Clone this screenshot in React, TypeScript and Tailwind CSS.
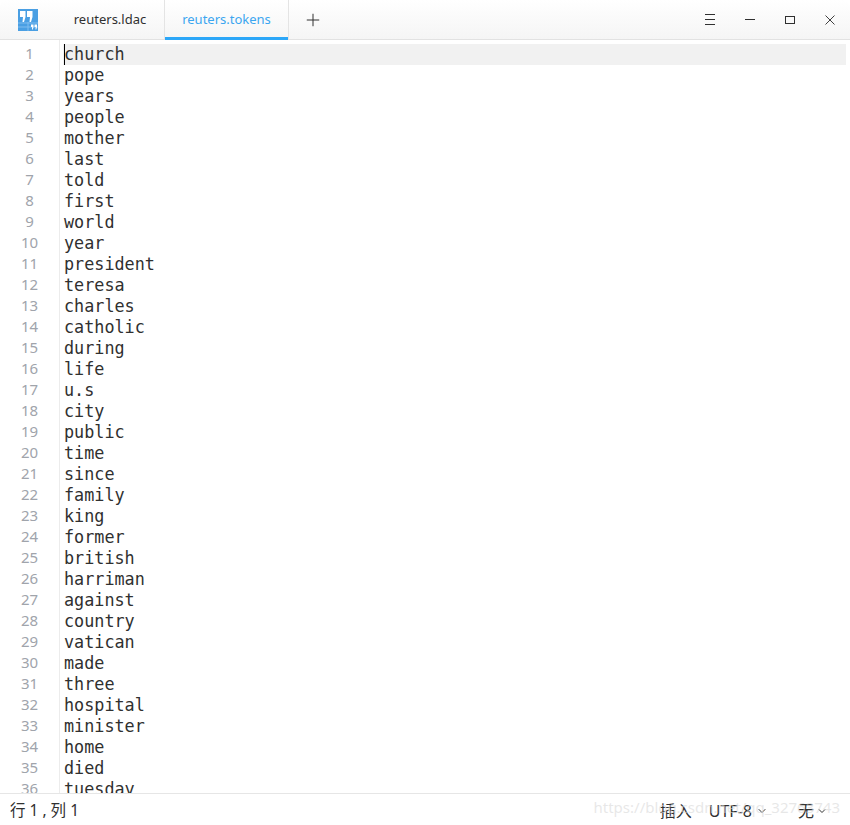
import React from "react";
import { ChevronDown, Plus } from "lucide-react";

const words = [
  "church",
  "pope",
  "years",
  "people",
  "mother",
  "last",
  "told",
  "first",
  "world",
  "year",
  "president",
  "teresa",
  "charles",
  "catholic",
  "during",
  "life",
  "u.s",
  "city",
  "public",
  "time",
  "since",
  "family",
  "king",
  "former",
  "british",
  "harriman",
  "against",
  "country",
  "vatican",
  "made",
  "three",
  "hospital",
  "minister",
  "home",
  "died",
  "tuesday",
];

const uiFont = "[font-family:'Noto_Sans','Noto_Sans_CJK_SC',sans-serif]";

function AppLogo() {
  return (
    <svg width="20" height="22" viewBox="0 0 20 22" className="shrink-0">
      <rect width="20" height="22" fill="#4a9fe3" />
      <path d="M0 14h20M0 18h20M10 13v9" stroke="#7fbdf0" strokeWidth="1" />
      <path d="M2 2h5.500v6l-1.500 5H4.500L5 8H2z" fill="#fff" />
      <path d="M9 2h5.500v6l-1.500 5h-1.500L12 8H9z" fill="#fff" />
      <path d="M13 15.500h2.500v2.500l-.7 2.500H14l.2-2.500H13zM16.500 15.500H19v2.500l-.7 2.500h-.8l.2-2.500h-1.200z" fill="#fff" />
    </svg>
  );
}

export default function App() {
  return (
    <div className={`h-[825px] w-[850px] flex flex-col overflow-hidden bg-white ${uiFont}`}>
      <div className="h-10 shrink-0 flex items-stretch rounded-t-lg border-b border-[#e2e2e2] bg-gradient-to-b from-white to-[#f5f5f5]">
        <div className="ml-[18px] flex items-center">
          <AppLogo />
        </div>
        <div className="ml-[18px] w-[108px] flex items-center justify-center text-[13px] text-[#303030]">
          reuters.ldac
        </div>
        <div className="relative w-[125px] flex items-center justify-center border-x border-[#e4e4e4] text-[13px] text-[#3ba6f0]">
          reuters.tokens
          <div className="absolute inset-x-0 bottom-[-1px] h-[3px] bg-[#2ca7f8]" />
        </div>
        <div className="w-12 flex items-center justify-center text-[#303030]">
          <Plus size={20} strokeWidth={1.2} />
        </div>
        <div className="ml-auto flex items-center gap-5 pr-[10px]">
          <div className="w-5 flex flex-col gap-[4px] items-center">
            <div className="h-px w-[10px] bg-[#303030]" />
            <div className="h-px w-[10px] bg-[#303030]" />
            <div className="h-px w-[10px] bg-[#303030]" />
          </div>
          <div className="w-5 flex justify-center">
            <div className="h-px w-[10px] bg-[#303030]" />
          </div>
          <div className="w-5 flex justify-center">
            <div className="h-[8px] w-[10px] border border-[#303030]" />
          </div>
          <div className="w-5 flex justify-center">
            <svg width="10" height="10" viewBox="0 0 10 10" stroke="#404040" strokeWidth="1">
              <path d="M0.500 0.500l9 9M9.500 0.500l-9 9" />
            </svg>
          </div>
        </div>
      </div>

      <div className="flex-1 min-h-0 overflow-hidden flex [font-family:'DejaVu_Sans_Mono',monospace] text-[16.8px] leading-[21px]">
        <div className={`w-[60px] shrink-0 border-r border-[#ececec] pt-[3px] text-center text-[15px] text-[#a0a4ab] ${uiFont}`}>
          {words.map((_, i) => (
            <div key={i} className="h-[21px]">
              {i + 1}
            </div>
          ))}
        </div>
        <div className="flex-1 pt-[4px] pl-[3px] pr-[4px] text-[#303030]">
          {words.map((word, i) => (
            <div key={word} className={i === 0 ? "h-[21px] bg-[#f1f1f1] relative pl-px" : "h-[21px] pl-px"}>
              {i === 0 && <div className="absolute left-px top-0 h-[21px] w-px bg-black" />}
              {word}
            </div>
          ))}
        </div>
      </div>

      <div className="relative h-[32px] shrink-0 flex items-center border-t border-[#e6e6e6] bg-white pt-[3px] pl-[10px] pr-[22px] text-[16px] text-[#303030]">
        <span className="text-[15.5px]">行 1 , 列 1</span>
        <div className="ml-auto flex items-center">
          <span>插入</span>
          <span className="ml-[17px]">UTF-8</span>
          <ChevronDown size={12} className="ml-[4px]" />
          <span className="ml-[30px]">无</span>
          <ChevronDown size={12} className="ml-[2px]" />
        </div>
        <div className="absolute right-[10px] top-[2px] text-[15px] text-[#d8d8d8]/60">
          https://blog.csdn.net/qq_32763743
        </div>
      </div>
    </div>
  );
}
